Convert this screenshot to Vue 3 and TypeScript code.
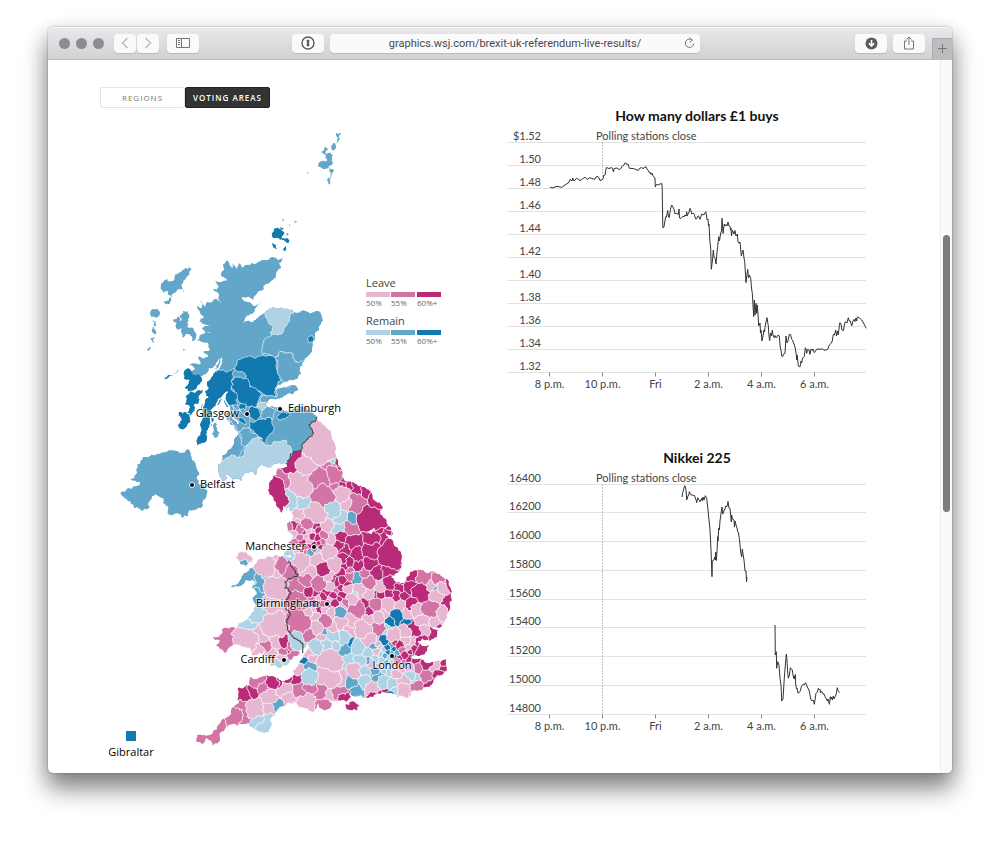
<script setup lang="ts">
import { ref } from 'vue'

type Pt = [number, number]
type Shade = 'a' | 'b' | 'c' | 'x' | 'y' | 'z'

/* leave: a b c, remain: x y z, weak to strong */
const shades: Record<Shade, string> = {
  a: '#e7b7d1',
  b: '#d274a6',
  c: '#b92b78',
  x: '#afd2e4',
  y: '#62a6c9',
  z: '#1179af',
}

const view = ref<'regions' | 'areas'>('areas')
const address = ref('graphics.wsj.com/brexit-uk-referendum-live-results/')

function parse(text: string): Pt[] {
  return text
    .trim()
    .split(/\s+/)
    .map((pair) => pair.split(',').map(Number) as Pt)
}

function noise(x: number, y: number): number {
  const s = Math.sin(Math.round(x * 5) * 12.9898 + Math.round(y * 5) * 78.233) * 43758.5453
  return s - Math.floor(s) - 0.5
}

/* Splits an edge and shifts its midpoint; both directions give the same line. */
function splitEdge(p: Pt, q: Pt, amp: number, min: number, out: Pt[]): void {
  const dx = q[0] - p[0]
  const dy = q[1] - p[1]
  const len = Math.hypot(dx, dy)
  if (len < min) {
    out.push(q)
    return
  }
  const mx = (p[0] + q[0]) / 2
  const my = (p[1] + q[1]) / 2
  const dir = dx > 0 || (dx === 0 && dy > 0) ? 1 : -1
  const shift = noise(mx, my) * amp * dir
  const mid: Pt = [mx - dy * shift, my + dx * shift]
  splitEdge(p, mid, amp, min, out)
  splitEdge(mid, q, amp, min, out)
}

function rough(points: Pt[], amp: number, min: number, closed = true): string {
  const out: Pt[] = [points[0]]
  const last = closed ? points.length : points.length - 1
  for (let i = 0; i < last; i++) {
    splitEdge(points[i], points[(i + 1) % points.length], amp, min, out)
  }
  return 'M' + out.map((p) => p[0].toFixed(1) + ' ' + p[1].toFixed(1)).join('L') + (closed ? 'Z' : '')
}

const mainland = parse(`282,257 278,260 273,257 268,260 262,260 255,264 247,265 243,268 240,263 237,269 233,263 232,268 227,260
 223,264 224,270 221,275 227,280 215,281 219,286 213,290 219,296 222,304 215,299 207,302 206,306 201,300 202,308 197,306
 200,312 204,317 199,322 209,325 202,329 211,333 200,335 197,341 208,343 210,350 203,352 208,357 198,357 201,363 189,365
 195,369 190,375 199,377 209,368 220,359 214,370 207,382 209,388 205,392 209,398 202,405 203,412 200,425 202,430 197,440 198,445
 206,442 208,428 213,418 209,416 215,406 222,396 228,391 224,402 231,408 227,412 228,420 235,426 238,432 234,444
 223,455 222,462 218,465 219,472 224,481 226,472 233,480 242,481 244,473 252,471 256,475 263,465 270,468 276,463 285,463
 287,467 277,469 273,478 269,483 268,490 273,497 277,507 282,513 283,506 286,511 289,507 292,513 294,516 292,521 287,523
 289,532 293,537 288,542 291,546 288,549 284,555 290,554 295,558 287,557 280,557 270,557 264,559 257,562 254,566 247,572 242,576 237,584
 231,587 240,586 246,580 252,580 256,583 252,588 257,594 253,600 255,607 251,614 247,620 236,628 230,628 222,630 219,637 213,637
 220,641 216,646 225,653 229,648 238,645 246,648 250,648 252,655 261,653 267,657 271,666 280,668 287,665 293,657 299,654
 306,647 312,640 306,652 303,658 299,664 293,670 293,676 286,680 272,676 262,677 250,677 250,685 238,688 238,694 239,702 232,708 227,717 220,723
 212,734 204,735 197,735 196,741 202,744 207,738 213,746 218,743 220,733 226,727 233,724 242,724 248,723 253,728 258,731 264,733 269,731 272,724
 270,719 276,715 280,707 287,703 295,702 305,708 313,712 317,707 318,703 322,709 329,709 332,703 330,700 338,700 347,702 351,697
 347,692 353,696 361,695 368,698 373,697 380,694 390,693 398,697 407,698 411,693 415,690 424,687 432,684 435,678 443,674 447,667
 446,659 440,661 433,662 427,663 418,659 410,657 416,655 427,651 429,645 422,646 418,641 428,640 437,637 438,630 432,628 439,628
 445,620 450,609 452,600 451,589 448,580 440,574 430,572 410,572 406,578 404,583 398,582 391,577 397,573 402,565 402,557 398,548
 393,541 386,534 378,529 372,534 366,532 374,528 382,530 390,536 393,534 388,525 383,517 380,511 383,507 375,501 371,492 363,487
 354,483 345,481 342,470 338,460 335,452 333,440 331,430 322,424 317,417 311,412 300,407 290,411 283,409 275,408 264,404 277,399
 287,394 298,390 292,385 282,388 275,391 278,385 285,382 293,380 301,373 303,362 309,355 312,347 315,333 320,325 322,317 317,311
 305,311 297,313 285,309 275,308 266,311 258,318 247,321 243,323 246,317 254,312 260,303 254,306 248,302 242,297 253,300 257,293
 266,284 276,275 281,268 279,263`)

const anglesey = parse('238,553 246,552 251,556 253,561 249,562 246,567 240,564 236,558')

const coastPath = [mainland, anglesey].map((p) => rough(p, 0.45, 2)).join('')

const lochs = ['207,432 211,422 216,407 227,392', '206,386 213,373 221,358', '227,409 232,412 238,424', '224,398 229,406 228,412', '200,412 204,400 203,391'].map(
  (text) => rough(parse(text), 0.4, 2, false),
)

const islands = (
  [
    ['y', '143,457 152,454 160,454 166,452 173,450 188,449 191,454 192,460 196,465 199,472 197,479 204,485 208,491 205,499 198,508 189,510 188,516 178,513 169,515 168,507 163,503 157,495 150,501 149,508 143,511 135,508 127,500 121,492 132,489 140,482 130,480 137,473 138,464'],
    ['y', '189,265 190,274 184,280 182,287 184,292 177,290 172,297 168,291 163,293 162,283 167,279 173,281 177,274'],
    ['y', '164,301 171,297 170,303 165,306'],
    ['y', '150,313 156,309 160,314 156,318 151,317'],
    ['y', '152,321 156,322 156,334 152,332'],
    ['y', '151,338 155,337 153,343'],
    ['y', '147,350 151,347 150,350'],
    ['y', '173,320 178,316 180,321 183,311 188,318 187,327 194,331 196,337 192,341 187,334 181,338 182,329 176,328'],
    ['y', '182,348 186,349 184,352'],
    ['y', '214,423 218,424 220,433 216,438 212,433'],
    ['y', '336,133 341,133 339,140 336,143 337,137'],
    ['y', '333,143 336,146 334,151 331,148'],
    ['y', '325,146 328,148 326,155 321,152'],
    ['y', '328,153 333,155 333,163 329,166 325,169 318,166 320,162 327,161'],
    ['y', '328,167 334,170 331,177 329,185 328,178 330,172'],
    ['z', '164,378 170,375 178,369 173,376'],
    ['z', '184,372 190,369 192,374 202,379 200,384 194,390 183,388 188,384 190,380 184,378'],
    ['z', '196,392 203,390 199,398 190,405 185,404'],
    ['z', '193,399 199,398 191,415 187,412'],
    ['z', '179,412 186,412 190,419 185,428 177,425 182,420'],
    ['z', '274,230 281,229 283,235 280,240 275,238 272,235'],
    ['z', '271,242 276,245 277,249 273,247'],
    ['z', '278,238 283,238 289,240 288,243 284,240'],
    ['z', '280,227 284,228 282,230'],
    ['z', '282,218 285,220 283,221'],
    ['z', '285,246 286,250 284,251'],
    ['y', '289,224 291,225 290,229'],
    ['y', '294,220 297,222 294,223'],
    ['y', '287,233 289,234 287,236'],
    ['y', '307,172 309,172 308,174'],
    ['y', '184,312 188,311 189,318 186,320'],
    ['c', '345,705 352,701 360,706 357,711 351,710'],
    ['c', '281,508 284,509 282,514'],
  ] as [Shade, string][]
).map(([shade, text]) => ({ fill: shades[shade], d: rough(parse(text), 0.6, 1.6) }))

/* Voting areas of England and Wales: centre x, centre y, radius, shade. */
const areaText = `
322,444,19,a 305,466,9,a 294,463,8,c 278,479,9,b 300,484,13,a 275,494,6,c 290,500,7,x 301,501,7,x 330,461,3,x 329,466,3,b 338,463,3,c
338,469,3,c 334,467,2,b 320,480,10,b 333,475,9,b 323,497,11,b 341,493,7,a 346,504,6,a 335,486,3,b 342,486,3,c 345,480,3,c 350,486,3,c 360,489,5,c
373,500,5,c 366,495,4,c 358,504,10,b 370,518,13,c 383,527,8,c 352,519,4,y 332,510,8,x 339,516,6,x 315,513,10,a 338,528,6,x 326,526,5,a
350,528,6,b 299,515,5,a 296,519,4,a 294,526,4,c 289,529,3,b 308,523,6,b 315,526,3,c 318,531,3,c 325,534,5,b 331,539,5,a 340,537,5,c
353,543,7,c 338,544,4,c 328,552,6,a 346,550,4,c 372,538,7,c 383,538,5,c 372,550,8,c 357,555,6,c 391,556,12,c 370,564,6,c 358,565,5,c
335,564,6,a 343,560,3,c 345,567,3,c 350,563,3,c 349,571,2,b 341,572,3,c 300,530,4,b 309,531,3,a 294,534,3,a 289,538,3,x 300,537,3,b 306,536,3,a 312,536,3,c
318,538,3,c 295,543,3,b 302,542,2,c 305,547,2,b 310,541,2,a 314,545,2,c 318,543,2,c 298,547,2,a 297,552,3,a 290,554,4,x 293,551,2,y 301,552,2,c
306,552,2,b 311,552,3,y 318,553,3,x 322,547,2,c 309,547,2,c 314,550,2,b 322,541,2,b 304,532,2,c 313,532,2,a
302,562,9,a 317,561,7,a 310,572,7,a 323,570,6,c 316,577,2,c 319,583,7,b 328,577,4,a
241,560,9,a 265,567,8,a 275,566,6,a 283,565,5,b 291,572,5,b 248,577,6,y 262,583,9,y 257,596,4,y 277,589,10,a 275,605,11,a 274,624,12,a
260,612,8,x 249,623,6,x 246,638,10,a 259,634,7,a 227,638,10,b 256,651,4,a 266,649,5,b 272,653,4,a 277,646,4,a 285,645,3,c 283,651,3,b 287,650,2,c 290,647,3,b
276,665,5,x 287,662,3,x 292,656,3,b 281,656,3,a 298,641,7,x 299,622,12,b 297,600,10,b 297,588,8,b 307,581,5,b 308,592,5,c 304,604,5,b
315,593,3,c 311,599,3,b 315,604,3,c 318,598,2,a 323,597,3,c 319,610,3,c 314,610,3,a 327,592,3,c 322,604,2,b 318,604,2,c 324,610,3,a
325,620,6,b 316,618,5,a 308,613,4,a 309,634,5,b 316,628,6,a 330,586,5,a 331,580,3,c 337,583,3,c 343,581,4,c 350,576,4,b 333,596,3,c 337,591,3,b 335,602,4,c
343,595,4,c 341,588,3,c 329,603,2,b 331,599,2,a 339,600,2,c 347,589,4,a 346,583,3,c 357,578,5,y 365,573,5,b 369,582,7,b 377,573,6,c 360,590,6,a 370,592,5,a
380,586,6,a 354,594,2,x 351,600,5,a 387,571,5,c 390,583,6,c 381,594,4,c 375,594,3,c 388,594,3,c 396,596,4,c 400,588,4,c 402,580,3,c 410,587,6,c 411,577,5,c 405,596,4,c
421,593,8,c 424,578,6,b 437,577,5,b 432,585,4,a 443,588,5,a 446,582,2,b 436,589,1,y 437,596,6,a 449,585,3,c 447,601,4,c 411,605,5,c 417,610,5,a
431,609,8,b 444,612,7,a 423,621,6,a 435,621,5,a 424,629,5,a 434,632,4,c 414,630,6,c 405,632,5,a 422,643,5,c 387,605,7,a 400,605,5,a 407,613,4,a 396,617,6,z 391,621,3,z
405,620,3,z 398,616,1,x 357,610,8,b 367,605,3,c 369,612,3,c 377,605,6,b 339,613,5,y 341,606,4,a 345,603,3,b 332,613,4,a 340,622,6,a 352,620,6,a 363,629,8,a 351,631,5,a
378,628,6,b 378,617,5,a 369,619,5,a 387,630,4,x 394,636,6,a 384,612,4,a 332,635,6,x 342,639,6,x 317,647,6,x 326,645,6,x 335,646,4,x 345,650,6,y 352,645,2,z 333,627,5,a 324,634,2,y
323,637,3,a 358,648,6,x 367,653,4,x 369,640,6,a 374,647,3,y 384,641,3,z 378,643,3,a 377,652,3,a 360,660,5,x 348,660,6,x 355,670,6,a 366,660,3,y 330,661,12,a 328,676,11,a
340,678,6,a 308,667,4,y 305,661,2,z 300,668,4,a 308,677,6,x 310,655,4,a 296,677,4,c 300,690,6,b 309,687,5,b 306,701,7,a 292,700,6,a 320,692,5,b 328,696,3,a 340,694,6,b
324,705,4,b 311,657,3,a 272,682,5,c 282,682,5,c 257,682,5,b 264,688,4,b 245,694,6,c 252,692,3,c 269,697,7,a 285,690,5,a 255,708,8,a 268,708,5,a 274,704,1,y 260,726,8,x 268,724,6,x
240,712,11,b 225,726,9,b 202,738,10,b 353,681,5,y 358,688,4,y 352,697,3,c 347,698,2,c 365,682,5,x 373,688,6,a 384,683,6,x 374,671,4,y 378,677,4,y 366,671,4,x
371,663,4,a 393,684,4,x 397,691,3,x 394,696,2,z 379,695,3,c 384,694,2,c 403,690,6,a 404,680,5,a 417,687,5,b 427,675,6,b 410,676,4,x 415,679,3,x 397,672,4,a 418,667,4,b 425,665,4,c
405,664,3,b 434,667,4,a 443,664,3,c 443,671,3,c 437,675,4,c 431,683,3,c 410,667,4,a 384,650,2,x 387,648,2,z 391,646,2,y 394,649,2,z 388,653,2,z 392,653,1,y 385,656,2,y 389,658,2,x
394,657,2,z 397,653,2,y 382,660,3,x 387,663,2,y 392,663,3,x 397,661,2,b 400,657,2,c 400,645,4,c 395,643,3,c 402,650,3,b 405,655,3,c 409,658,3,c 415,661,3,c 408,648,3,a 413,641,4,a 410,651,2,c
385,668,3,x 391,670,3,x 380,666,2,a 376,659,2,x 380,654,2,x 380,648,2,x 414,650,3,c 420,652,4,c 401,668,3,a 405,641,4,a`

interface Site {
  x: number
  y: number
  r: number
  shade: Shade
}

const sites: Site[] = areaText
  .trim()
  .split(/\s+/)
  .map((item) => {
    const [x, y, r, shade] = item.split(',')
    return { x: Number(x), y: Number(y), r: Number(r), shade: shade as Shade }
  })

/* Power-diagram cell of one site. */
function cellOf(site: Site): Pt[] {
  let cell: Pt[] = [
    [180, 400],
    [470, 400],
    [470, 760],
    [180, 760],
  ]
  for (const other of sites) {
    if (other === site) continue
    const nx = other.x - site.x
    const ny = other.y - site.y
    const limit =
      (other.x ** 2 + other.y ** 2 - other.r ** 2 - (site.x ** 2 + site.y ** 2 - site.r ** 2)) / 2
    const next: Pt[] = []
    for (let i = 0; i < cell.length; i++) {
      const p = cell[i]
      const q = cell[(i + 1) % cell.length]
      const dp = p[0] * nx + p[1] * ny - limit
      const dq = q[0] * nx + q[1] * ny - limit
      if (dp <= 0) next.push(p)
      if (dp < 0 !== dq < 0) {
        const t = dp / (dp - dq)
        next.push([p[0] + (q[0] - p[0]) * t, p[1] + (q[1] - p[1]) * t])
      }
    }
    cell = next
    if (!cell.length) break
  }
  return cell
}

const areas = sites
  .map((site) => ({ fill: shades[site.shade], cell: cellOf(site) }))
  .filter((area) => area.cell.length > 2)
  .map((area) => ({ fill: area.fill, d: rough(area.cell, 0.6, 2.5) }))

const scottish = (
  [
    ['y', '317,417 309,425 312,436 305,442 298,451 287,461 284,466 268,470 262,484 200,490 140,480 140,240 340,240 340,395'],
    ['x', '263,311 268,321 273,327 273,338 263,345 274,344 278,335 285,334 287,325 292,322 293,313 291,305 270,304'],
    ['y', '263,345 263,354 275,358 284,352 293,354 297,362 304,364 330,350 330,300 294,300 293,313 287,325 278,335'],
    ['y', '275,358 284,352 293,354 297,362 306,364 304,378 290,384 282,380 277,370'],
    ['z', '237,362 247,357 263,354 272,356 276,361 277,370 282,380 277,386 275,397 263,394 250,386 247,380 243,372 235,370'],
    ['z', '232,380 240,377 246,378 250,387 262,395 258,403 240,403 235,397 231,388'],
    ['z', '235,369 232,380 231,388 236,400 238,406 224,414 206,450 190,450 195,385 207,378 213,372 226,372'],
    ['y', '262,396 277,397 275,388 300,380 302,392 275,405 260,402'],
    ['x', '258,403 268,402 271,407 262,411 257,407'],
    ['z', '240,404 246,404 246,410 240,409'],
    ['z', '251,406 257,408 262,416 257,421 251,418 248,412'],
    ['z', '249,421 262,419 272,420 272,433 267,446 262,438 254,433 249,427'],
    ['z', '277,416 283,412 290,413 286,418 280,421'],
    ['z', '275,407 280,407 281,411 276,410'],
    ['z', '307,339 313,336 313,342 309,343'],
    ['y', '262,411 271,407 275,412 272,420 262,419'],
    ['y', '228,420 236,421 239,432 245,441 237,458 218,460'],
    ['y', '239,432 249,428 255,433 262,438 256,440 245,447'],
    ['y', '232,405 240,409 250,418 249,428 239,432 229,420'],
    ['z', '239,417 245,420 246,425 240,422'],
    ['x', '222,461 230,456 239,457 246,448 252,439 259,437 267,446 273,442 280,442 285,440 291,448 292,454 286,462 284,466 268,470 262,484 215,490 212,465'],
  ] as [Shade, string][]
).map(([shade, text]) => ({ fill: shades[shade], d: rough(parse(text), 0.5, 2.2) }))

const borders = ['317,417 309,425 312,436 305,442 298,451 287,461', '288,561 293,568 298,577 291,579 285,582 285,588 291,592 287,600 286,609 290,613 287,623 288,631 293,637 300,641 303,648 303,653'].map(
  (text) => rough(parse(text), 0.5, 2.2, false),
)

const cities = [
  { name: 'Edinburgh', x: 280, y: 409, tx: 288, ty: 412, anchor: 'start' },
  { name: 'Glasgow', x: 247, y: 414, tx: 239, ty: 417, anchor: 'end' },
  { name: 'Belfast', x: 192, y: 485, tx: 200, ty: 488, anchor: 'start' },
  { name: 'Manchester', x: 314, y: 547, tx: 306, ty: 550, anchor: 'end' },
  { name: 'Birmingham', x: 327, y: 604, tx: 319, ty: 607, anchor: 'end' },
  { name: 'Cardiff', x: 284, y: 660, tx: 275, ty: 663, anchor: 'end' },
  { name: 'London', x: 392, y: 656, tx: 392, ty: 669, anchor: 'middle' },
]

const legend = [
  { name: 'Leave', y: 287, tones: [shades.a, shades.b, shades.c] },
  { name: 'Remain', y: 325, tones: [shades.x, shades.y, shades.z] },
]
const steps = ['50%', '55%', '60%+']
const stepX = [366, 391, 417]

const hours = ['8 p.m.', '10 p.m.', 'Fri', '2 a.m.', '4 a.m.', '6 a.m.']
const hourX = (i: number): number => 549.5 + Math.round(i * 52.9)

const charts = [
  {
    title: 'How many dollars £1 buys',
    top: 126,
    first: 142.5,
    last: 372.5,
    closeEnd: 180,
    labels: ['$1.52', '1.50', '1.48', '1.46', '1.44', '1.42', '1.40', '1.38', '1.36', '1.34', '1.32'],
    lines: [
      `549.7,187 552,188 555,187 557,186.3 561.7,187.3 565,185 568,183 569,182.3 570,179.3 571,180 572,181 572.7,178 574,181 576.7,178.3 578,179 580,180.7
       582.7,178.7 585,177.3 587.3,179.3 590,177.7 592,178.5 595,179.3 596,177 598,176.5 599,178 600,180.5 602,180 603.3,178.3 603.5,175.5 605,175 605.7,171 606.3,167.5 609,168.5 611.7,167.5
       613,170 613.5,172 614,168.5 617,168 619.3,169.5 620.5,169 622.3,166 624,165 625.3,162.7 626,164 628.3,164.3 629.3,168.3 633.3,168.5 636,169.5 638.3,170.5 640,168 641.7,167.7
       643,168.5 646,166.7 647,169 648,170 649.3,172.7 650,172 651,174.5 652,173 653.3,176.7 655,178 655.3,187 656,184.5 658,185 660,184 661.7,183.5 662.2,187 662.7,222 663,228 664,226.7
       665.7,216.7 666.5,217 667.7,210.5 668.5,217 669.3,217.5 670.5,209 671.7,205 673,207 674,209.3 675,214 676,213 678.3,214.5 679,209 679.5,218 681,218.5 683.3,216 684,217 685,215
       686,216 686.7,211.7 687,216 689,212 690,208.3 691,211 691.7,214 693,213 694.3,214.5 695,217 696,219.3 697,218 698.3,215.7 700,219.3 701.7,214 704,215 705.7,211.7 706.5,215
       707,220 708,219 708.5,226 709,224 709.8,240 710.7,248 711.3,269.3 712.5,260 713.3,250 714,257 715,258 716,264 717,252 717.7,246.7 718.7,236.7 719.5,241 720.7,233 721.5,231 722,218.3
       723,233.5 724.3,224 725,226 726,224.5 727,226 728,222 729,226 730,226.5 730.5,230 731,228 731.5,236 732.3,230 734,234 735,230.5 736,236 737.3,234 738,242 739,243.3 740,242 741.3,256 743,250
       744,258 744.7,261.7 745.5,275 746,282.7 746.5,278 747.7,269.3 748.5,278 749.5,275 750.7,278.3 751.5,288 752.3,293.3 753.7,316.7 754.3,300 755,315 756,303.3 756.7,313.3 757.3,305 758,314
       758.7,326 760,323 760.5,333 761,330 762,341 763,336 764,330 764.5,332 765,327.3 766,322 767,317.7 768.3,326 769,336 769.7,340.7 770.5,333 771.5,336 772.3,330 773,335 774.3,337.7 775,335.5
       776.3,338 778,335 779.3,336 780.3,348 781,350 781.7,356 782.7,356.7 783.5,354 785,353.3 786,336 787,343 788,341 789.3,334.3 790.5,334.5 791.7,339.3 792.5,340 794.3,345 795.2,348
       796.3,355 796.7,360 797.2,355 798.3,366 800,367 801,361 801.7,363 802.5,358 804.3,356.7 805.3,347.7 806,349 806.7,353.3 807.5,349.5 809,350 810,354.5 811,349 812,350.5 813,349
       814.3,352.7 816.7,349.3 822.7,349 824,350.3 826,350 827.7,349.3 829.3,345 831,343.5 832.3,341 833.3,334.3 834.5,335 835.7,330 836.5,336 837.5,331 838.3,335 839.5,324 840,322.7 841,324
       842,330 843.5,330.5 844.5,324 845.3,321.7 847,323 848.3,317.7 849.3,321 850.3,321 851.7,326 853,321 854,319.3 855,321.5 856,318 856.7,321 857.3,317 859,317.5 861.7,320 863,322 864,324 865,326 866.3,328.3`,
    ],
  },
  {
    title: 'Nikkei 225',
    top: 468,
    first: 484.5,
    last: 714.5,
    closeEnd: 714,
    labels: ['16400', '16200', '16000', '15800', '15600', '15400', '15200', '15000', '14800'],
    lines: [
      `682,497 682.7,492.5 683.5,490 684.7,485.7 685.7,488 686.2,492 686.7,500 688,496 689,494 689.3,491.7 690.5,494.5 692,495 694.7,495.7 695.5,499 696.2,500 696.7,502.7 697.7,497.7 699,500
       700,501.7 701.7,498.3 702.3,501 703,497 704,500 705.3,495.7 706.7,498.3 708,510 709,520 710,530 711,550 712,576.7 712.3,561 714,560 714.7,557 715.3,560 715.7,552 716.3,560.5 717,552
       717.7,536.7 718,541 718.7,528 719.3,530 720,521 721,513.3 722,507 722.5,514 723.3,513.3 724,510 725,509 725.7,506 726.7,506.7 727.5,505 728,501.5 729,508 730,508.3 731.3,522
       731.7,515 732.3,519 734,520 734.5,527 735,521 736,525 737,528 737.7,531.7 738.3,532 739.3,538.3 740.7,552 741.7,557 742.3,549 743,554 744,560 745,571 746,571 746.5,582 747,577`,
      `775,625 775.3,655 776.3,651.7 776.7,668.3 777.7,661.7 779,665 780,678.3 781,685 781.7,701 783,699 784.3,678 785.5,663 786.3,654 787,660 787.5,670 788.3,678.3 789.5,675 790.3,667.7
       792.3,670 793,675 793.7,678.3 794,676 794.5,679 795.3,674.5 795.7,684 796.5,689 797,688 798,693.3 800,691.7 801.7,685.7 803.5,684 804,685 805.7,682.7 806.5,685 808.3,689 809.3,691 810.7,699
       812,701 812.7,700 813.5,700.5 814.3,704.3 815.3,698 816,693.3 817.3,692 818.3,688.3 819.5,690 820,689 820.5,693 821.7,691.3 823,694 824,694 825,696.7 826,698 827.3,701 828,699
       828.7,702 829.5,704.3 830.3,696.7 831,699 831.5,697 832.3,700 833.3,696 834,699 835,696.7 836.3,694 837.3,687.7 838,690.5 839.7,692.7`,
    ],
  },
]

function rowY(chart: { first: number; last: number; labels: string[] }, i: number): number {
  return Math.round(chart.first + ((chart.last - chart.first) * i) / (chart.labels.length - 1)) - 0.5
}
</script>

<template>
  <main class="desk">
    <div class="window">
      <header class="toolbar">
        <div class="group left">
          <span class="lights"><i></i><i></i><i></i></span>
          <span class="pair">
            <button class="tool narrow" type="button" aria-label="Back">
              <svg width="8" height="12" viewBox="0 0 8 12"><path d="M6.5 1 1.5 6l5 5" class="faint" /></svg>
            </button>
            <button class="tool narrow" type="button" aria-label="Forward">
              <svg width="8" height="12" viewBox="0 0 8 12"><path d="M1.5 1l5 5-5 5" class="faint" /></svg>
            </button>
          </span>
          <button class="tool side-button" type="button" aria-label="Sidebar">
            <svg width="14" height="12" viewBox="0 0 14 12">
              <path d="M.5 1.500h13v9H.5zM5.500 1.500v9M2 3.500h2M2 5.500h2M2 7.500h2" class="line" />
            </svg>
          </button>
        </div>
        <div class="group centre">
          <button class="tool" type="button" aria-label="Password manager">
            <svg width="14" height="14" viewBox="0 0 14 14">
              <circle cx="7" cy="7" r="6" class="ring" />
              <path d="M5.700 3.700h2.600v2.600L7.700 7l.6.6v2.700H5.700V7.700l.6-.7-.6-.6z" class="solid" />
            </svg>
          </button>
          <div class="address">
            <input v-model="address" type="text" aria-label="Address" spellcheck="false" />
            <button class="reload" type="button" aria-label="Reload">
              <svg width="11" height="12" viewBox="0 0 11 12">
                <path d="M8.300 3.100A4.200 4.200 0 1 0 9.700 6.500M5.500.6l2.900 2.500-2.900 2.300" class="line" />
              </svg>
            </button>
          </div>
        </div>
        <div class="group right">
          <button class="tool" type="button" aria-label="Downloads">
            <svg width="13" height="13" viewBox="0 0 13 13">
              <circle cx="6.500" cy="6.500" r="6" class="solid" />
              <path d="M6.500 3v5M3.900 6.300l2.600 2.700 2.600-2.700" class="arrow" />
            </svg>
          </button>
          <button class="tool" type="button" aria-label="Share">
            <svg width="12" height="14" viewBox="0 0 12 14">
              <path d="M4 5H1.500v8h9V5H8M6 9V1M3.500 3.500 6 1l2.500 2.500" class="line" />
            </svg>
          </button>
          <button class="newtab" type="button" aria-label="New tab">
            <svg width="9" height="9" viewBox="0 0 9 9"><path d="M4.500 0v9M0 4.500h9" class="line" /></svg>
          </button>
        </div>
      </header>

      <div class="body">
        <div class="page">
          <section class="map-side">
            <div class="toggle">
              <button type="button" :class="{ on: view === 'regions' }" @click="view = 'regions'">REGIONS</button>
              <button type="button" :class="{ on: view === 'areas' }" @click="view = 'areas'">VOTING AREAS</button>
            </div>
            <svg class="map" viewBox="100 112 400 650" role="img" aria-label="Results by voting area">
              <defs>
                <clipPath id="coast"><path :d="coastPath" /></clipPath>
              </defs>
              <g clip-path="url(#coast)" class="areas">
                <path v-for="(area, i) in areas" :key="'a' + i" :d="area.d" :fill="area.fill" />
                <path v-for="(area, i) in scottish" :key="'s' + i" :d="area.d" :fill="area.fill" />
              </g>
              <path v-for="(line, i) in lochs" :key="'l' + i" :d="line" class="loch" />
              <path v-for="(isle, i) in islands" :key="'i' + i" :d="isle.d" :fill="isle.fill" />
              <path v-for="(line, i) in borders" :key="'b' + i" :d="line" class="border" />
              <g v-for="city in cities" :key="city.name">
                <circle :cx="city.x" :cy="city.y" r="2.500" class="dot" />
                <text :x="city.tx" :y="city.ty" :text-anchor="city.anchor" class="city">{{ city.name }}</text>
              </g>
              <g v-for="side in legend" :key="side.name">
                <text x="366" :y="side.y" class="side">{{ side.name }}</text>
                <g v-for="(tone, i) in side.tones" :key="tone">
                  <rect :x="stepX[i]" :y="side.y + 5" width="24" height="5" :fill="tone" />
                  <text :x="stepX[i]" :y="side.y + 19" class="step">{{ steps[i] }}</text>
                </g>
              </g>
              <rect x="126" y="731" width="10" height="10" fill="#1179af" />
              <text x="131" y="756" text-anchor="middle" class="city">Gibraltar</text>
            </svg>
          </section>

          <section class="chart-side">
            <figure v-for="chart in charts" :key="chart.title">
              <figcaption>{{ chart.title }}</figcaption>
              <svg class="chart" :viewBox="`507 ${chart.top} 360 270`" role="img" :aria-label="chart.title">
                <g v-for="(label, i) in chart.labels" :key="label">
                  <line x1="507" x2="866" :y1="rowY(chart, i)" :y2="rowY(chart, i)" class="grid" />
                  <text x="541" :y="rowY(chart, i) - 2.5" text-anchor="end" class="label">{{ label }}</text>
                </g>
                <line x1="602.500" x2="602.500" :y1="chart.first" :y2="chart.closeEnd" class="close" />
                <text x="596" :y="chart.first - 3" class="label">Polling stations close</text>
                <g v-for="(hour, i) in hours" :key="hour">
                  <line :x1="hourX(i)" :x2="hourX(i)" :y1="chart.last" :y2="chart.last + 4" class="tick" />
                  <text :x="hourX(i)" :y="chart.last + 15" text-anchor="middle" class="label">{{ hour }}</text>
                </g>
                <polyline v-for="(line, i) in chart.lines" :key="i" :points="line" class="series" />
              </svg>
            </figure>
          </section>
        </div>
        <div class="scroll"><div class="thumb"></div></div>
      </div>
    </div>
  </main>
</template>

<style>
body {
  margin: 0;
  background: #fff;
}
</style>

<style scoped>
.desk {
  padding: 27px 48px 69px;
  font-family: Lato, 'Open Sans', sans-serif;
  overflow: hidden;
}
.window {
  border-radius: 5px;
  background: #fff;
  box-shadow: 0 0 2px rgba(0, 0, 0, 0.35), 0 15px 24px 1px rgba(0, 0, 0, 0.46), 0 4px 20px rgba(0, 0, 0, 0.12);
}
.toolbar {
  display: grid;
  grid-template-columns: 244fr 408fr 252fr;
  height: 32px;
  border-bottom: 1px solid #bcb9bd;
  border-radius: 5px 5px 0 0;
  background: linear-gradient(#ebe8ec, #d4d1d5);
  box-shadow: inset 0 1px #f6f5f7;
}
.group {
  display: flex;
  align-items: center;
}
.left {
  padding-left: 11px;
  gap: 8px;
}
.lights {
  display: flex;
  gap: 6px;
  margin-right: 2px;
}
.lights i {
  width: 11px;
  height: 11px;
  border-radius: 50%;
  background: #8e8b93;
}
.pair {
  display: flex;
  gap: 1px;
}
.centre {
  gap: 6px;
}
.right {
  justify-content: flex-end;
  gap: 6px;
}
.tool,
.reload,
.newtab {
  display: flex;
  align-items: center;
  justify-content: center;
  flex: none;
  border: 0;
  padding: 0;
}
.tool {
  width: 32px;
  height: 19px;
  border-radius: 4px;
  background: #fbfafb;
  box-shadow: 0 1px 1px rgba(0, 0, 0, 0.14);
}
.pair .narrow {
  width: 22px;
}
.newtab {
  width: 20px;
  height: 21px;
  align-self: flex-end;
  margin-left: 1px;
  background: #bfbcc0;
  box-shadow: inset 1px 1px #acaaae;
}
.address {
  display: flex;
  flex: 1;
  min-width: 0;
  height: 19px;
  border-radius: 4px;
  background: #fbfafb;
  box-shadow: 0 1px 1px rgba(0, 0, 0, 0.14);
}
.address input {
  flex: 1;
  min-width: 0;
  border: 0;
  padding: 0 0 0 22px;
  background: none;
  text-align: center;
  font: 11px Roboto, sans-serif;
  color: #4a484c;
}
.reload {
  width: 22px;
  background: none;
}
svg {
  display: block;
}
.faint,
.line,
.ring,
.arrow {
  fill: none;
  stroke: #77757a;
}
.faint {
  stroke: #b9b7bb;
  stroke-width: 1.4;
}
.ring {
  stroke: #5b595e;
  stroke-width: 1.4;
}
.solid {
  fill: #5b595e;
}
.arrow {
  stroke: #fff;
  stroke-width: 1.6;
}
.body {
  display: flex;
}
.page {
  display: grid;
  grid-template-columns: 400fr 360fr;
  column-gap: 7px;
  flex: 1;
  min-width: 0;
  padding: 27px 73px 11px 52px;
}
.scroll {
  width: 11px;
  border-left: 1px solid #ececec;
  border-radius: 0 0 5px 0;
  background: #fafafa;
}
.thumb {
  width: 7px;
  height: 277px;
  margin: 175px auto 0;
  border-radius: 4px;
  background: #7d7d7d;
}
.toggle {
  display: flex;
  height: 21px;
  margin-bottom: 4px;
}
.toggle button {
  width: 85px;
  border: 1px solid #e4e4e4;
  border-radius: 2px;
  padding: 0;
  background: #fff;
  font: 8px 'Open Sans', sans-serif;
  letter-spacing: 1px;
  color: #777;
  white-space: nowrap;
}
.toggle .on {
  border-color: #222;
  background: #333;
  font-weight: 600;
  color: #fff;
}
.map,
.chart {
  width: 100%;
  height: auto;
}
.areas path {
  stroke: rgba(255, 255, 255, 0.75);
  stroke-width: 0.8;
  stroke-linejoin: round;
}
.loch {
  fill: none;
  stroke: #fff;
  stroke-width: 1.6;
}
.border {
  fill: none;
  stroke: #444;
  stroke-width: 1.1;
}
.dot {
  fill: #000;
  stroke: #fff;
  stroke-width: 1;
}
.city {
  font: 11px 'Open Sans', sans-serif;
  fill: #000;
  stroke: rgba(255, 255, 255, 0.55);
  stroke-width: 2;
  paint-order: stroke;
}
.side {
  font: 11px 'Open Sans', sans-serif;
  fill: #444;
}
.step {
  font: 8px 'Open Sans', sans-serif;
  fill: #666;
}
.chart-side {
  display: flex;
  flex-direction: column;
  gap: 52px;
  padding-top: 19px;
}
figure {
  margin: 0;
}
figcaption {
  padding-left: 20px;
  font-size: 14px;
  font-weight: 700;
  line-height: 20px;
  text-align: center;
  color: #111;
}
.label {
  font: 11px Lato, sans-serif;
  fill: #444;
}
.grid {
  stroke: #e2e2e2;
}
.close {
  stroke: #888;
  stroke-dasharray: 1 2;
}
.tick {
  stroke: #888;
}
.series {
  fill: none;
  stroke: #333;
  stroke-width: 1;
  stroke-linejoin: round;
}
</style>
